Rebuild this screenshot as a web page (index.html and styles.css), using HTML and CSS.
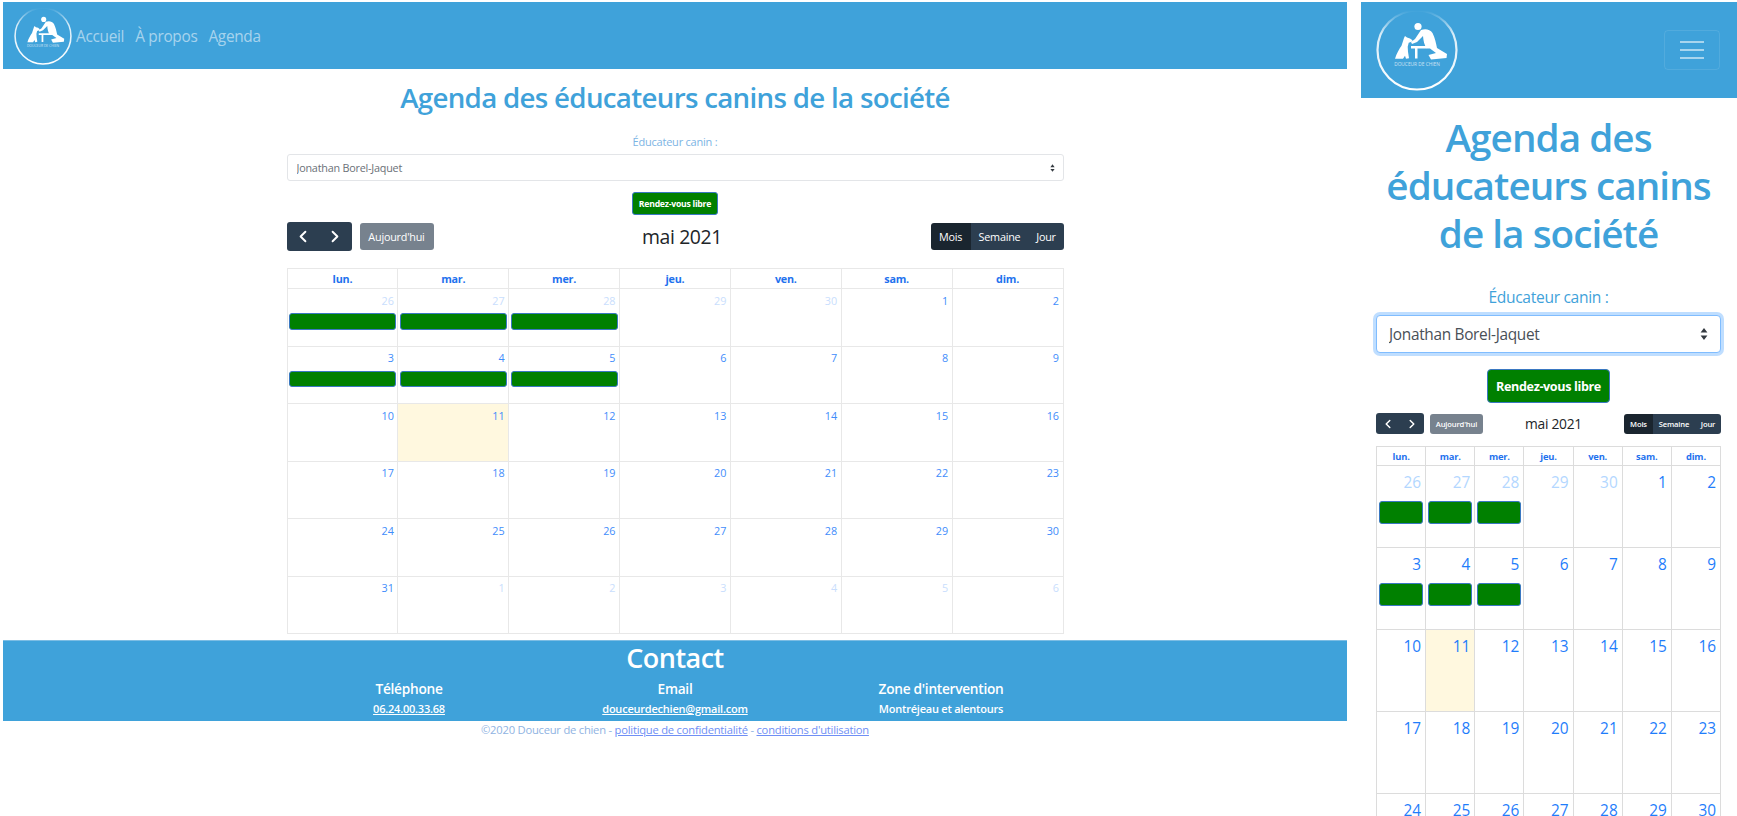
FILE: index.html
```html
<!DOCTYPE html>
<html lang="fr">
<head>
<meta charset="utf-8">
<title>Agenda des éducateurs canins</title>
<link rel="stylesheet" href="styles.css">
</head>
<body>
<svg class="defs" aria-hidden="true">
  <defs>
    <linearGradient id="ringfade" x1="0" y1="0" x2="0" y2="1">
      <stop offset="0" stop-color="#fff" stop-opacity="0"/>
      <stop offset=".3" stop-color="#fff" stop-opacity=".8"/>
      <stop offset="1" stop-color="#fff"/>
    </linearGradient>
    <symbol id="logo" viewBox="0 0 82 82">
      <circle cx="41" cy="41" r="39.5" fill="none" stroke="url(#ringfade)" stroke-width="2.2"/>
      <g transform="translate(1 2)">
        <circle cx="41" cy="15.5" r="3.6" fill="#fff"/>
        <path fill="#fff" d="M44 19C48 17.500 53 18 55.500 22C58 27 59 32 60 37L70 43L69.500 47L54 48.500L51.500 44L59 42L53 37.500L50 37.500C47 34 46.500 30 46 25L40 31L35 33L34 31L38 28Z"/>
        <path fill="#fff" d="M34 35H50V37.500H40.500V47.500H38V37.500H34Z"/>
        <path fill="#fff" d="M27 27L28 25L30 26.500L33 27.500L35.500 29.300L34.700 30.800L31.700 31.800L30.700 35.800L31 40.800L32 47.300L29 47.800L28 44.800L26 47.800L18 47.800C19.500 42.800 22 38.300 24.500 34.800Z"/>
      </g>
      <text x="41" y="56.500" text-anchor="middle" class="logo-text">DOUCEUR DE CHIEN</text>
    </symbol>
  </defs>
</svg>
<div class="page">

<section class="frame frame-wide">
  <nav class="nav">
    <svg class="logo"><use href="#logo"/></svg>
    <a class="nav-link">Accueil</a>
    <a class="nav-link">À propos</a>
    <a class="nav-link">Agenda</a>
  </nav>
  <main class="main">
    <h1 class="title">Agenda des éducateurs canins de la société</h1>
    <label class="label">Éducateur canin :</label>
    <div class="select-wrap">
      <select class="select"><option>Jonathan Borel-Jaquet</option></select>
      <svg class="select-arrows" viewBox="0 0 8 12"><path d="M4 0l3.400 4.600H.6zM4 12L.6 7.400h6.800z"/></svg>
    </div>
    <div class="free-row"><button class="free">Rendez-vous libre</button></div>
    <div class="toolbar">
      <div class="tool-left">
        <div class="group pager">
          <button class="btn"><svg class="chev" viewBox="0 0 10 16"><path d="M8 2L2 8l6 6"/></svg></button>
          <button class="btn"><svg class="chev" viewBox="0 0 10 16"><path d="M2 2l6 6-6 6"/></svg></button>
        </div>
        <button class="today">Aujourd'hui</button>
      </div>
      <h2 class="month">mai 2021</h2>
      <div class="group views">
        <button class="btn view active">Mois</button>
        <button class="btn view">Semaine</button>
        <button class="btn view">Jour</button>
      </div>
    </div>
    <table class="cal">
      <thead><tr><th>lun.</th><th>mar.</th><th>mer.</th><th>jeu.</th><th>ven.</th><th>sam.</th><th>dim.</th></tr></thead>
      <tbody>
        <tr><td class="off"><div class="num">26</div><div class="ev"></div></td><td class="off"><div class="num">27</div><div class="ev"></div></td><td class="off"><div class="num">28</div><div class="ev"></div></td><td class="off"><div class="num">29</div></td><td class="off"><div class="num">30</div></td><td><div class="num">1</div></td><td><div class="num">2</div></td></tr>
        <tr><td><div class="num">3</div><div class="ev"></div></td><td><div class="num">4</div><div class="ev"></div></td><td><div class="num">5</div><div class="ev"></div></td><td><div class="num">6</div></td><td><div class="num">7</div></td><td><div class="num">8</div></td><td><div class="num">9</div></td></tr>
        <tr><td><div class="num">10</div></td><td class="now"><div class="num">11</div></td><td><div class="num">12</div></td><td><div class="num">13</div></td><td><div class="num">14</div></td><td><div class="num">15</div></td><td><div class="num">16</div></td></tr>
        <tr><td><div class="num">17</div></td><td><div class="num">18</div></td><td><div class="num">19</div></td><td><div class="num">20</div></td><td><div class="num">21</div></td><td><div class="num">22</div></td><td><div class="num">23</div></td></tr>
        <tr><td><div class="num">24</div></td><td><div class="num">25</div></td><td><div class="num">26</div></td><td><div class="num">27</div></td><td><div class="num">28</div></td><td><div class="num">29</div></td><td><div class="num">30</div></td></tr>
        <tr><td><div class="num">31</div></td><td class="off"><div class="num">1</div></td><td class="off"><div class="num">2</div></td><td class="off"><div class="num">3</div></td><td class="off"><div class="num">4</div></td><td class="off"><div class="num">5</div></td><td class="off"><div class="num">6</div></td></tr>
      </tbody>
    </table>
  </main>
  <footer class="contact">
    <h2 class="contact-title">Contact</h2>
    <div class="contact-cols">
      <div class="contact-col"><h3 class="contact-head">Téléphone</h3><a class="contact-val link">06.24.00.33.68</a></div>
      <div class="contact-col"><h3 class="contact-head">Email</h3><a class="contact-val link">douceurdechien@gmail.com</a></div>
      <div class="contact-col"><h3 class="contact-head">Zone d'intervention</h3><span class="contact-val">Montréjeau et alentours</span></div>
    </div>
  </footer>
  <p class="legal">©2020 Douceur de chien - <a class="legal-link">politique de confidentialité</a> - <a class="legal-link">conditions d'utilisation</a></p>
</section>

<section class="frame frame-narrow">
  <nav class="nav">
    <svg class="logo"><use href="#logo"/></svg>
    <button class="toggler" aria-label="Menu"><span class="bar"></span><span class="bar"></span><span class="bar"></span></button>
  </nav>
  <main class="main">
    <h1 class="title">Agenda des éducateurs canins de la société</h1>
    <label class="label">Éducateur canin :</label>
    <div class="select-wrap">
      <select class="select"><option>Jonathan Borel-Jaquet</option></select>
      <svg class="select-arrows" viewBox="0 0 8 12"><path d="M4 0l3.400 4.600H.6zM4 12L.6 7.400h6.800z"/></svg>
    </div>
    <div class="free-row"><button class="free">Rendez-vous libre</button></div>
    <div class="toolbar">
      <div class="tool-left">
        <div class="group pager">
          <button class="btn"><svg class="chev" viewBox="0 0 10 16"><path d="M8 2L2 8l6 6"/></svg></button>
          <button class="btn"><svg class="chev" viewBox="0 0 10 16"><path d="M2 2l6 6-6 6"/></svg></button>
        </div>
        <button class="today">Aujourd'hui</button>
      </div>
      <h2 class="month">mai 2021</h2>
      <div class="group views">
        <button class="btn view active">Mois</button>
        <button class="btn view">Semaine</button>
        <button class="btn view">Jour</button>
      </div>
    </div>
    <table class="cal">
      <thead><tr><th>lun.</th><th>mar.</th><th>mer.</th><th>jeu.</th><th>ven.</th><th>sam.</th><th>dim.</th></tr></thead>
      <tbody>
        <tr><td class="off"><div class="num">26</div><div class="ev"></div></td><td class="off"><div class="num">27</div><div class="ev"></div></td><td class="off"><div class="num">28</div><div class="ev"></div></td><td class="off"><div class="num">29</div></td><td class="off"><div class="num">30</div></td><td><div class="num">1</div></td><td><div class="num">2</div></td></tr>
        <tr><td><div class="num">3</div><div class="ev"></div></td><td><div class="num">4</div><div class="ev"></div></td><td><div class="num">5</div><div class="ev"></div></td><td><div class="num">6</div></td><td><div class="num">7</div></td><td><div class="num">8</div></td><td><div class="num">9</div></td></tr>
        <tr><td><div class="num">10</div></td><td class="now"><div class="num">11</div></td><td><div class="num">12</div></td><td><div class="num">13</div></td><td><div class="num">14</div></td><td><div class="num">15</div></td><td><div class="num">16</div></td></tr>
        <tr><td><div class="num">17</div></td><td><div class="num">18</div></td><td><div class="num">19</div></td><td><div class="num">20</div></td><td><div class="num">21</div></td><td><div class="num">22</div></td><td><div class="num">23</div></td></tr>
        <tr><td><div class="num">24</div></td><td><div class="num">25</div></td><td><div class="num">26</div></td><td><div class="num">27</div></td><td><div class="num">28</div></td><td><div class="num">29</div></td><td><div class="num">30</div></td></tr>
      </tbody>
    </table>
  </main>
</section>

</div>
</body>
</html>
```
FILE: styles.css
```css
* { box-sizing: border-box; }
html, body { margin: 0; height: 816px; overflow: hidden; background: #fff; }
body { font-family: "Open Sans", "Noto Sans", sans-serif; color: #212529; }
.defs { width: 0; height: 0; display: block; }
.logo-text { font-family: "Open Sans", sans-serif; font-size: 4.8px; fill: #fff; opacity: .7; }

.page { display: flex; gap: 14px; padding: 2px 0 0 3px; align-items: flex-start; }
.frame { flex: none; }
.frame-wide { width: 1344px; }
.frame-narrow { width: 376px; }

/* nav */
.nav { display: flex; align-items: center; background: #3fa2da; }
.logo { display: block; flex: none; }
.nav-link { color: rgba(255,255,255,.55); font-size: 15.4px; letter-spacing: -.02em; padding-top: 2px; }
.frame-wide .nav { height: 67px; padding: 0 0 0 10.5px; gap: 11px; }
.frame-wide .logo { width: 58px; height: 58px; margin-right: -6.5px; }
.frame-narrow .nav { height: 96px; padding: 0 17px 0 15px; justify-content: space-between; }
.frame-narrow .logo { width: 82px; height: 82px; }
.toggler { width: 56px; height: 40px; padding: 0; background: none; border: 1px solid rgba(255,255,255,.1); border-radius: 4px; display: flex; flex-direction: column; justify-content: center; align-items: center; gap: 6px; }
.bar { display: block; width: 24px; height: 2px; background: rgba(255,255,255,.55); }

/* main */
.main { display: flex; flex-direction: column; margin: 0 auto; }
.frame-wide .main { width: 777px; }
.frame-narrow .main { width: 345px; margin: 0 15px; }
.title { margin: 0; text-align: center; font-weight: 600; color: #3fa2da; letter-spacing: -.025em; }
.frame-wide .title { font-size: 27.7px; line-height: 34px; margin: 11px -40px 0; }
.frame-narrow .title { font-size: 38.7px; line-height: 48px; margin: 15px -6px 0; }
.label { display: block; text-align: center; color: #3fa2da; letter-spacing: -.02em; }
.frame-wide .label { font-size: 11px; line-height: 17px; margin-top: 19px; color: #7cb4e4; }
.frame-narrow .label { font-size: 15.6px; line-height: 24px; margin-top: 28px; }

.select-wrap { position: relative; }
.select { display: block; width: 100%; appearance: none; background: #fff; font-family: inherit; color: #495057; border: 1px solid #ced4da; border-radius: 3px; letter-spacing: -.02em; outline: none; }
.frame-wide .select { height: 27px; font-size: 10.8px; padding: 0 9px; border-color: #e3e5e8; color: #6a7077; }
.frame-narrow .select { height: 38px; font-size: 15.4px; padding: 0 12px; margin-top: 6px; border-color: #80bdff; border-radius: 4px; box-shadow: 0 0 0 3px rgba(0,123,255,.25); }
.frame-wide .select-wrap { margin-top: 4px; }
.select-arrows { position: absolute; top: 50%; fill: #343a40; }
.frame-wide .select-arrows { width: 5px; height: 8px; right: 9px; margin-top: -4px; }
.frame-narrow .select-arrows { width: 8px; height: 12px; right: 13px; margin-top: -3px; }

.free-row { display: flex; justify-content: center; }
.free { background: #008000; color: #fff; font-family: inherit; font-weight: 700; border: 1px solid #3a78c2; padding: 0; letter-spacing: -.03em; }
.frame-wide .free-row { margin-top: 11px; }
.frame-wide .free { width: 86px; height: 23px; font-size: 8.7px; border-radius: 3px; }
.frame-narrow .free-row { margin-top: 16px; }
.frame-narrow .free { width: 123px; height: 34px; font-size: 12.6px; border-radius: 4px; }

/* toolbar */
.toolbar { display: flex; justify-content: space-between; align-items: center; }
.tool-left { display: flex; align-items: center; }
.group { display: flex; border-radius: 3px; overflow: hidden; }
.btn { display: flex; align-items: center; justify-content: center; background: #2c3e50; color: #fff; border: 0; padding: 0; font-family: inherit; letter-spacing: -.02em; }
.btn.active { background: #1a252f; }
.today { background: #77828e; color: #fff; border: 0; padding: 0; font-family: inherit; border-radius: 3px; letter-spacing: -.02em; }
.chev { fill: none; stroke: #fff; stroke-linecap: round; stroke-linejoin: round; stroke-width: 2.4; display: block; }
.month { margin: 0; font-weight: 400; letter-spacing: -.02em; white-space: nowrap; }

.frame-wide .toolbar { height: 29px; margin-top: 7px; }
.frame-wide .tool-left { gap: 8px; }
.frame-wide .pager { height: 29px; }
.frame-wide .pager .btn { width: 32.5px; }
.frame-wide .chev { width: 8px; height: 13px; }
.frame-wide .today { width: 74px; height: 27px; font-size: 10.8px; }
.frame-wide .month { font-size: 19.4px; }
.frame-wide .views { height: 27px; }
.frame-wide .view { font-size: 10.8px; }
.frame-wide .view:nth-child(1) { width: 40px; }
.frame-wide .view:nth-child(2) { width: 58px; }
.frame-wide .view:nth-child(3) { width: 35px; }

.frame-narrow .toolbar { height: 21px; margin-top: 10px; }
.frame-narrow .tool-left { gap: 6px; }
.frame-narrow .pager { height: 21px; }
.frame-narrow .pager .btn { width: 24px; }
.frame-narrow .chev { width: 6px; height: 10px; }
.frame-narrow .today { width: 53px; height: 20px; font-size: 7.6px; font-weight: 600; }
.frame-narrow .month { font-size: 13.8px; }
.frame-narrow .views { height: 20px; }
.frame-narrow .view { font-size: 7.6px; font-weight: 600; }
.frame-narrow .view:nth-child(1) { width: 29px; }
.frame-narrow .view:nth-child(2) { width: 42px; }
.frame-narrow .view:nth-child(3) { width: 26px; }

/* calendar */
.cal { width: 100%; table-layout: fixed; border-collapse: collapse; }
.cal th, .cal td { padding: 0; }
.cal th { color: #1f72ee; font-weight: 700; text-align: center; letter-spacing: -.02em; }
.cal td { vertical-align: top; }
.cal td.now { background: #fff8df; }
.num { text-align: right; color: #3f8dfb; }
.off .num { color: #c9defd; }
.ev { background: #008000; border: 1px solid #3a78c2; border-radius: 3px; }

.frame-wide .cal { margin-top: 17px; }
.frame-wide .cal th, .frame-wide .cal td { border: 1px solid #e8e8e8; }
.frame-wide .cal th { height: 20px; font-size: 10.8px; }
.frame-wide .cal td { height: 57.5px; }
.frame-wide .num { font-size: 10.8px; line-height: 15px; padding: 3.5px 3.5px 0 0; }
.frame-wide .ev { height: 16.5px; margin: 5.5px 1.5px 0; }

.frame-narrow .cal { margin-top: 12px; }
.frame-narrow .cal th, .frame-narrow .cal td { border: 1px solid #dcdcdc; }
.frame-narrow .cal th { height: 19px; font-size: 9.4px; }
.frame-narrow .cal td { height: 82px; }
.frame-narrow .num { font-size: 15.4px; line-height: 24px; padding: 5px 4px 0 0; color: #1f7dfb; }
.frame-narrow .off .num { color: #b3d7ff; }
.frame-narrow .ev { height: 23px; margin: 6px 2px 0; }

/* footer */
.contact { margin-top: 6px; height: 81px; background: #3fa2da; color: #fff; text-align: center; border-top: 1px solid #7cbde4; }
.contact-title { margin: 0; font-size: 27px; line-height: 34px; font-weight: 600; letter-spacing: -.02em; }
.contact-cols { display: grid; grid-template-columns: repeat(3, 266px); justify-content: center; margin-top: 4px; }
.contact-col { display: flex; flex-direction: column; align-items: center; }
.contact-head { margin: 0; font-size: 13.7px; line-height: 19px; font-weight: 600; letter-spacing: -.02em; }
.contact-val { font-size: 11px; line-height: 19px; font-weight: 600; letter-spacing: -.02em; margin-top: 1px; }
.link { text-decoration: underline; }
.legal { margin: 0; text-align: center; font-size: 11.2px; line-height: 18px; color: #8fb3e2; letter-spacing: -.02em; }
.legal-link { color: #6f8ff5; text-decoration: underline; }
```
